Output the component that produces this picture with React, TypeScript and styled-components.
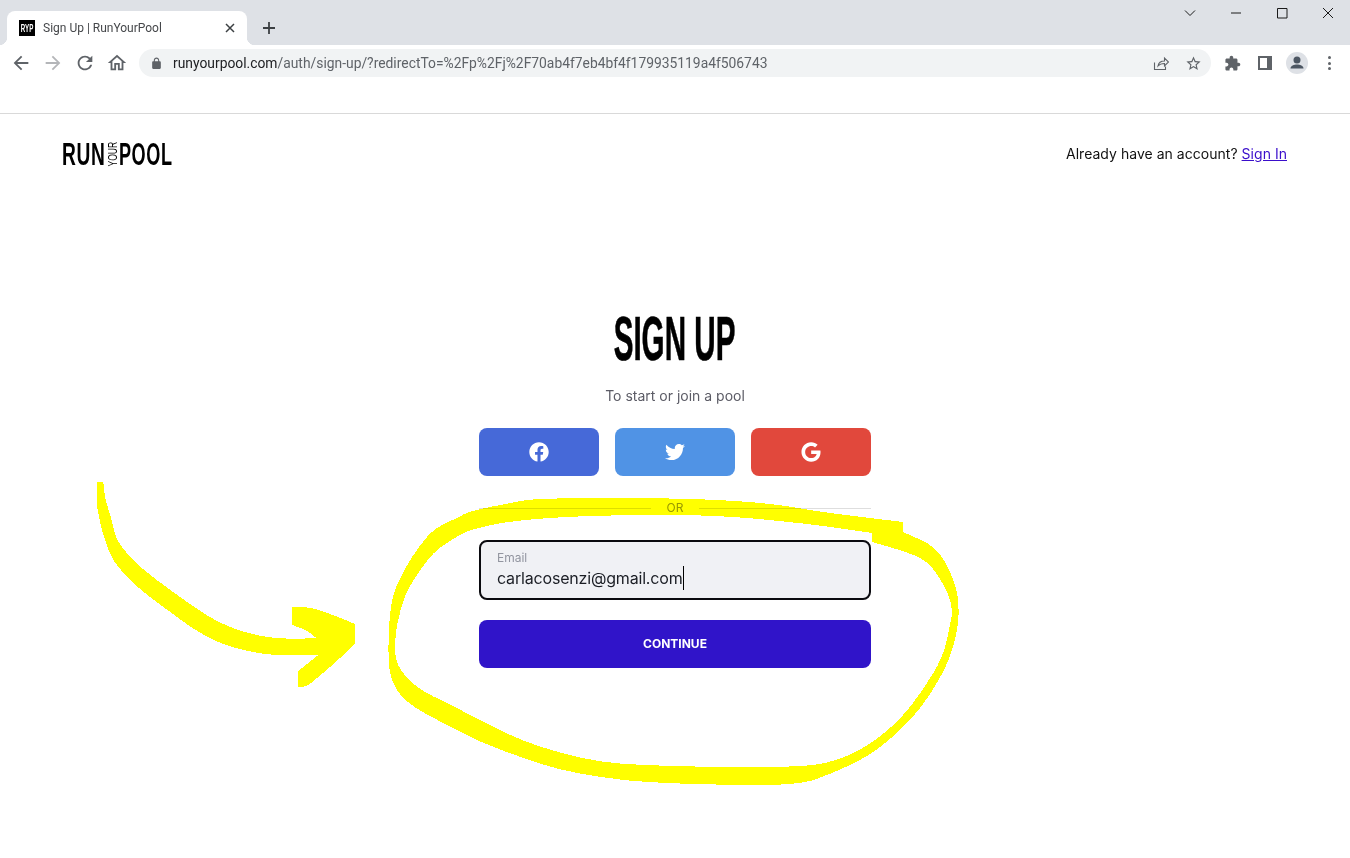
import React from "react";
import styled, { createGlobalStyle } from "styled-components";
import { FaFacebook, FaGoogle, FaTwitter } from "react-icons/fa";

// a point written twice stays a hard corner, the others get rounded
const smoothPath = (points: string) => {
  const p = points.trim().split(/\s+/).map((s) => s.split(",").map(Number));
  const mid = (a: number[], b: number[]) => `${(a[0] + b[0]) / 2} ${(a[1] + b[1]) / 2}`;
  let d = `M${mid(p[p.length - 1], p[0])}`;
  p.forEach((pt, i) => {
    d += `Q${pt[0]} ${pt[1]} ${mid(pt, p[(i + 1) % p.length])}`;
  });
  return d + "Z";
};

const arrowPath = smoothPath(
  "52,36 52,36 70,36 70,36 75,90 95,145 105,200 135,245 190,300 260,352 340,410 410,455 490,487 590,507 710,505 710,505 " +
    "680,480 636,465 636,465 636,411 636,411 690,411 760,435 825,462 825,462 825,520 825,520 770,575 710,625 680,650 655,650 655,650 655,603 655,603 715,555 715,555 " +
    "580,557 490,541 420,520 340,478 270,425 200,375 145,325 105,280 85,240 65,180 52,115 52,115"
);

const loopPath = smoothPath(
  "470,511 510,503 537,498 683,498 770,503 820,512 903,522 903,522 903,532 903,532 937,547 953,577 959,600 958,630 947,667 " +
    "920,710 893,737 867,757 833,773 800,785 720,785 640,782 600,777 560,770 520,757 480,742 445,724 413,707 " +
    "397,692 388,670 389,620 393,593 405,568 420,545 435,528 457,518 457,518 " +
    "460,535 460,535 440,547 427,560 408,588 400,610 395,637 395,658 402,673 420,690 447,703 480,720 520,740 560,753 " +
    "600,762 640,765 707,767 800,767 833,762 867,747 900,720 923,690 943,657 949,630 953,610 947,590 930,563 " +
    "910,553 872,542 872,542 872,533 872,533 803,523 703,514 570,516 503,522 470,530 460,535 460,535 457,518 457,518"
);

const App = () => {
  return (
    <Screen>
      <GlobalStyle />
      <TabStrip>
        <Tab>
          <Favicon>
            <span>RYP</span>
          </Favicon>
          <TabTitle>Sign Up | RunYourPool</TabTitle>
          <TabClose viewBox="0 0 10 10">
            <path d="M1 1l8 8M9 1l-8 8" />
          </TabClose>
        </Tab>
        <NewTab viewBox="0 0 12 12">
          <path d="M6 0v12M0 6h12" />
        </NewTab>
        <WindowControls>
          <WindowButton viewBox="0 0 12 12">
            <path d="M1 3.5l5 5 5-5" />
          </WindowButton>
          <WindowButton viewBox="0 0 12 12">
            <path d="M1 6h10" />
          </WindowButton>
          <WindowButton viewBox="0 0 12 12">
            <path d="M1.5 1.5h9.500v9.500h-9.500z" />
          </WindowButton>
          <WindowButton viewBox="0 0 12 12">
            <path d="M1 1l10 10M11 1L1 11" />
          </WindowButton>
        </WindowControls>
      </TabStrip>

      <Toolbar>
        <NavGroup>
          <NavIcon viewBox="0 0 24 24">
            <path d="M20 11H7.83l5.59-5.59L12 4l-8 8 8 8 1.41-1.41L7.83 13H20v-2z" />
          </NavIcon>
          <NavIcon $muted viewBox="0 0 24 24">
            <path d="M4 11h12.17l-5.59-5.59L12 4l8 8-8 8-1.41-1.41L16.17 13H4v-2z" />
          </NavIcon>
          <NavIcon viewBox="0 0 24 24">
            <path d="M17.65 6.35A7.958 7.958 0 0 0 12 4c-4.42 0-7.99 3.58-7.99 8s3.57 8 7.99 8c3.73 0 6.84-2.55 7.73-6h-2.08A5.99 5.99 0 0 1 12 18c-3.31 0-6-2.69-6-6s2.69-6 6-6c1.66 0 3.14.69 4.22 1.78L13 11h7V4l-2.35 2.35z" />
          </NavIcon>
          <NavIcon viewBox="0 0 24 24">
            <path d="M12 5.69l5 4.5V18h-2v-6H9v6H7v-7.81l5-4.5M12 3L2 12h3v8h6v-6h2v6h6v-8h3L12 3z" />
          </NavIcon>
        </NavGroup>
        <Omnibox>
          <LockIcon viewBox="0 0 24 24">
            <path d="M18 8h-1V6c0-2.76-2.24-5-5-5S7 3.24 7 6v2H6c-1.1 0-2 .9-2 2v10c0 1.1.9 2 2 2h12c1.1 0 2-.9 2-2V10c0-1.1-.9-2-2-2zM9 6c0-1.66 1.34-3 3-3s3 1.34 3 3v2H9V6z" />
          </LockIcon>
          <Url>
            <b>runyourpool.com</b>/auth/sign-up/?redirectTo=%2Fp%2Fj%2F70ab4f7eb4bf4f179935119a4f506743
          </Url>
          <ShareIcon viewBox="0 0 16 16">
            <path d="M1.5 7.5v7h11v-3M5 11c.5-3 3-5 6.5-5V3l4 4-4 4V8.500C9 8.500 6.500 9.300 5 11z" />
          </ShareIcon>
          <StarIcon viewBox="0 0 24 24">
            <path d="M22 9.24l-7.19-.62L12 2 9.19 8.63 2 9.240l5.46 4.730L5.820 21 12 17.270 18.180 21l-1.630-7.030L22 9.240zM12 15.400l-3.760 2.270 1-4.280-3.320-2.880 4.380-.38L12 6.100l1.710 4.040 4.380.38-3.320 2.880 1 4.280L12 15.400z" />
          </StarIcon>
        </Omnibox>
        <ToolbarActions>
          <ActionIcon viewBox="0 0 24 24">
            <path d="M20.500 11H19V7c0-1.100-.9-2-2-2h-4V3.500C13 2.120 11.880 1 10.500 1S8 2.120 8 3.500V5H4c-1.100 0-1.990.9-1.990 2v3.800H3.500c1.490 0 2.700 1.210 2.700 2.700s-1.210 2.700-2.700 2.700H2V20c0 1.100.9 2 2 2h3.800v-1.500c0-1.490 1.210-2.700 2.700-2.700 1.490 0 2.700 1.210 2.700 2.700V22H17c1.100 0 2-.9 2-2v-4h1.500c1.380 0 2.500-1.120 2.500-2.500S21.880 11 20.500 11z" />
          </ActionIcon>
          <SidePanel />
          <Avatar>
            <svg viewBox="0 0 22 22" width="22" height="22">
              <circle cx="11" cy="8" r="3.500" fill="#4d5763" />
              <path d="M4.500 16.500c0-2.700 3.500-4 6.500-4s6.500 1.300 6.500 4z" fill="#4d5763" />
            </svg>
          </Avatar>
          <MenuDots>
            <i />
            <i />
            <i />
          </MenuDots>
        </ToolbarActions>
      </Toolbar>
      <BookmarkBar />

      <Header>
        <Logo>
          <LogoWord $width={43} $scale={0.6}>
            RUN
          </LogoWord>
          <LogoSmall>YOUR</LogoSmall>
          <LogoWord $width={53} $scale={0.565}>
            POOL
          </LogoWord>
        </Logo>
        <HeaderText>
          Already have an account? <a href="#signin">Sign In</a>
        </HeaderText>
      </Header>

      <Main>
        <Title>SIGN UP</Title>
        <Subtitle>To start or join a pool</Subtitle>
        <SocialRow>
          <SocialButton $color="#4669d8">
            <FaFacebook />
          </SocialButton>
          <SocialButton $color="#5093e5">
            <FaTwitter />
          </SocialButton>
          <SocialButton $color="#e1483c">
            <FaGoogle />
          </SocialButton>
        </SocialRow>
        <Divider>
          <span>OR</span>
        </Divider>
        <EmailField>
          <EmailLabel>Email</EmailLabel>
          <EmailValue>carlacosenzi@gmail.com</EmailValue>
        </EmailField>
        <ContinueButton>CONTINUE</ContinueButton>
      </Main>

      <Scribble viewBox="0 0 1350 858">
        <g transform="translate(80 470) scale(0.3333)">
          <path d={arrowPath} />
        </g>
        <path d={loopPath} />
      </Scribble>
    </Screen>
  );
};

export default App;

const GlobalStyle = createGlobalStyle`
  html, body {
    margin: 0;
    padding: 0;
    background: #fff;
  }
  * {
    box-sizing: border-box;
  }
`;

const Screen = styled.div`
  position: relative;
  width: 1350px;
  height: 858px;
  overflow: hidden;
  background: #fff;
  font-family: Inter, "Liberation Sans", sans-serif;
`;

const TabStrip = styled.div`
  display: flex;
  align-items: flex-end;
  height: 45px;
  padding-left: 7px;
  background: #dee1e6;
`;

const Tab = styled.div`
  position: relative;
  display: flex;
  align-items: center;
  width: 240px;
  height: 34px;
  padding: 0 12px;
  background: #fff;
  border-radius: 8px 8px 0 0;

  &::before,
  &::after {
    content: "";
    position: absolute;
    bottom: 0;
    width: 8px;
    height: 8px;
  }
  &::before {
    left: -8px;
    background: radial-gradient(circle at 0 0, transparent 8px, #fff 8.5px);
  }
  &::after {
    right: -8px;
    background: radial-gradient(circle at 100% 0, transparent 8px, #fff 8.5px);
  }
`;

const Favicon = styled.div`
  display: flex;
  align-items: center;
  justify-content: center;
  flex: none;
  width: 16px;
  height: 16px;
  background: #000;
  color: #fff;
  font: bold 10px "Liberation Sans", sans-serif;

  span {
    transform: scaleX(0.62);
  }
`;

const TabTitle = styled.div`
  flex: 1;
  margin-left: 8px;
  font: 12px Roboto, sans-serif;
  color: #45474a;
`;

const TabClose = styled.svg`
  width: 10px;
  height: 10px;

  path {
    stroke: #3c4043;
    stroke-width: 1.500;
    fill: none;
  }
`;

const NewTab = styled.svg`
  width: 12px;
  height: 12px;
  margin: 0 0 11px 16px;

  path {
    stroke: #3c4043;
    stroke-width: 1.800;
    fill: none;
  }
`;

const WindowControls = styled.div`
  display: flex;
  gap: 34px;
  margin-left: auto;
  padding: 0 16px 26px 0;
`;

const WindowButton = styled.svg`
  width: 12px;
  height: 12px;

  path {
    stroke: #1a1a1a;
    stroke-width: 1;
    fill: none;
  }
`;

const Toolbar = styled.div`
  display: flex;
  align-items: center;
  height: 36px;
  padding: 0 0 0 10px;
  background: #fff;
`;

const NavGroup = styled.div`
  display: flex;
  gap: 10px;
  margin-right: 11px;
`;

const NavIcon = styled.svg<{ $muted?: boolean }>`
  width: 22px;
  height: 22px;
  fill: ${(p) => (p.$muted ? "#b4b6b9" : "#5f6368")};
`;

const Omnibox = styled.div`
  display: flex;
  align-items: center;
  flex: none;
  width: 1072px;
  height: 28px;
  padding: 0 9px 0 11px;
  border-radius: 14px;
  background: #f1f3f4;
`;

const LockIcon = styled.svg`
  flex: none;
  width: 13px;
  height: 13px;
  fill: #5f6368;
`;

const Url = styled.div`
  flex: 1;
  margin-left: 10px;
  font: 13.850px Roboto, sans-serif;
  color: #5f6368;
  white-space: nowrap;

  b {
    font-weight: 400;
    color: #202124;
  }
`;

const ShareIcon = styled.svg`
  flex: none;
  width: 16px;
  height: 16px;
  margin-right: 16px;

  path {
    stroke: #5f6368;
    stroke-width: 1.100;
    fill: none;
  }
`;

const StarIcon = styled.svg`
  flex: none;
  width: 17px;
  height: 17px;
  fill: #5f6368;
`;

const ToolbarActions = styled.div`
  display: flex;
  align-items: center;
  margin-left: 13px;
`;

const ActionIcon = styled.svg`
  width: 17px;
  height: 17px;
  fill: #5f6368;
`;

const SidePanel = styled.div`
  width: 14px;
  height: 14px;
  margin-left: 17px;
  background: #fff;
  border: 2px solid #5f6368;
  border-right-width: 5px;
`;

const Avatar = styled.div`
  display: flex;
  align-items: center;
  justify-content: center;
  width: 22px;
  height: 22px;
  margin-left: 14px;
  border-radius: 50%;
  background: #dee1e6;
`;

const MenuDots = styled.div`
  display: flex;
  flex-direction: column;
  gap: 2.500px;
  margin-left: 20px;

  i {
    display: block;
    width: 3px;
    height: 3px;
    border-radius: 50%;
    background: #5f6368;
  }
`;

const BookmarkBar = styled.div`
  height: 33px;
  border-bottom: 1px solid #d9d9d9;
`;

const Header = styled.header`
  display: flex;
  align-items: center;
  justify-content: space-between;
  height: 80px;
  padding: 0 63px 0 62px;
`;

const Logo = styled.div`
  display: flex;
  align-items: center;
  height: 24px;
  color: #000;
  font-family: "Liberation Sans", sans-serif;
  font-weight: 700;
`;

const LogoWord = styled.span<{ $width: number; $scale: number }>`
  display: block;
  width: ${(p) => p.$width}px;
  font-size: 32px;
  line-height: 24px;
  letter-spacing: 1px;
  white-space: nowrap;
  transform: scaleX(${(p) => p.$scale});
  transform-origin: left center;
`;

const LogoSmall = styled.span`
  display: flex;
  align-items: center;
  justify-content: center;
  width: 11px;
  height: 24px;
  margin: 0 1px 0 2px;
  font-size: 13px;
  font-weight: 400;
  line-height: 11px;
  white-space: nowrap;
  writing-mode: vertical-rl;
  transform: rotate(180deg) scaleY(0.66);
`;

const HeaderText = styled.div`
  margin-bottom: 2px;
  font-size: 14px;
  letter-spacing: 0.03px;
  color: #111;

  a {
    color: #3a0ecb;
  }
`;

const Main = styled.main`
  display: flex;
  flex-direction: column;
  align-items: center;
  width: 392px;
  margin: 0 auto;
  padding-top: 112px;
`;

const Title = styled.h1`
  margin: 0;
  font: 700 63px/64px "Liberation Sans", sans-serif;
  color: #000;
  white-space: nowrap;
  -webkit-text-stroke: 0.7px #000;
  transform: scaleX(0.47);
`;

const Subtitle = styled.p`
  margin: 16px 0 0;
  font-size: 14px;
  line-height: 20px;
  color: #5c5c66;
`;

const SocialRow = styled.div`
  display: grid;
  grid-template-columns: repeat(3, 120px);
  gap: 16px;
  margin-top: 22px;
`;

const SocialButton = styled.button<{ $color: string }>`
  display: flex;
  align-items: center;
  justify-content: center;
  height: 48px;
  padding: 0;
  border: 0;
  border-radius: 8px;
  background: ${(p) => p.$color};
  color: #fff;
  font-size: 20px;
`;

const Divider = styled.div`
  display: flex;
  align-items: center;
  width: 100%;
  margin-top: 24px;
  height: 16px;
  font-size: 12px;
  color: #999;

  &::before,
  &::after {
    content: "";
    flex: 1;
    height: 1px;
    background: #dedede;
  }

  span {
    padding: 0 16px;
    line-height: 16px;
  }
`;

const EmailField = styled.div`
  width: 100%;
  height: 60px;
  margin-top: 24px;
  padding: 8px 16px;
  border: 2px solid #0a0a0f;
  border-radius: 8px;
  background: #f0f1f5;
`;

const EmailLabel = styled.div`
  font-size: 12px;
  line-height: 16px;
  color: #9295a0;
`;

const EmailValue = styled.div`
  width: max-content;
  font-size: 16px;
  line-height: 24px;
  letter-spacing: -0.18px;
  color: #1a1d24;
  border-right: 1px solid #000;
`;

const ContinueButton = styled.button`
  width: 100%;
  height: 48px;
  margin-top: 20px;
  padding: 0 0 2px;
  border: 0;
  border-radius: 8px;
  background: #3014c9;
  color: #fff;
  font: 700 12px Inter, sans-serif;
`;

const Scribble = styled.svg`
  position: absolute;
  inset: 0;
  width: 1350px;
  height: 858px;
  mix-blend-mode: multiply;
  pointer-events: none;

  path {
    fill: #ffff00;
    shape-rendering: crispEdges;
  }
`;
